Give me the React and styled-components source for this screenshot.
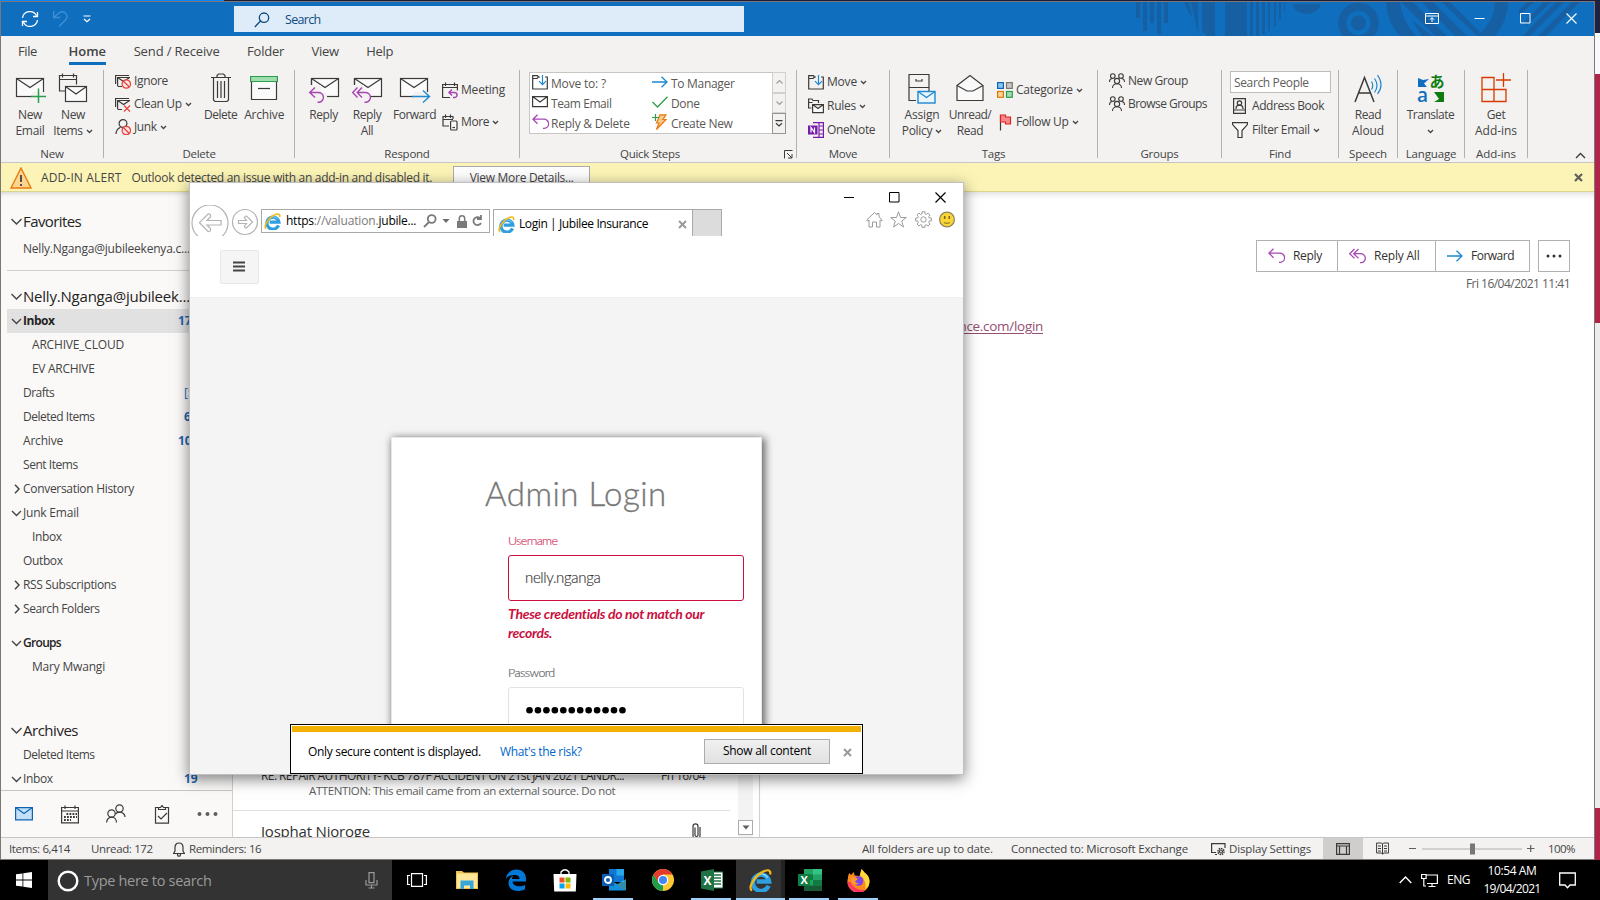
import React from "react";
import styled, { createGlobalStyle } from "styled-components";

const Global = createGlobalStyle`
  * { box-sizing: border-box; }
  body { margin: 0; overflow: hidden; font-family: "Open Sans", "Noto Sans CJK JP", sans-serif; }
  svg { display: block; flex: none; }
`;

/* ---------- shared ---------- */
const Text = styled.span`
  font-size: ${(p) => p.$size || 12}px;
  letter-spacing: ${(p) => (p.$ls === undefined ? -0.36 : p.$ls)}px;
  font-weight: ${(p) => p.$weight || 400};
  color: ${(p) => p.$color || "inherit"};
  line-height: 16px;
  white-space: nowrap;
  flex: none;
`;
const Gap = styled.div`
  width: ${(p) => p.$w}px;
  flex: none;
`;

const Svg = ({ w, h, children, ...rest }) => (
  <svg width={w} height={h} viewBox={`0 0 ${w} ${h}`} fill="none" stroke="#3b3a39" strokeWidth="1.2" {...rest}>
    {children}
  </svg>
);

/* ---------- frame ---------- */
const Desktop = styled.div`
  width: 1600px;
  height: 900px;
  display: flex;
  flex-direction: column;
  background: #000;
`;
const TopStrip = styled.div`
  height: 1px;
  flex: none;
  background: linear-gradient(90deg, #0a84ff 224px, #1c1b38 224px);
`;
const Upper = styled.div`
  display: flex;
  height: 859px;
`;
const EdgeStrip = styled.div`
  width: 5px;
  background: linear-gradient(
    #1f2042 32px, #f9f9fb 32px 73px, #b02449 73px 322px, #ececec 322px 807px, #b02449 807px
  );
`;
const OutlookWindow = styled.div`
  width: 1595px;
  border: 1px solid #7b7876;
  background: #fff;
  display: flex;
  flex-direction: column;
  color: #444;
`;

/* ---------- title bar ---------- */
const TitleBar = styled.div`
  height: 34px;
  flex: none;
  background: #106ebe;
  display: flex;
  align-items: center;
  position: relative;
`;
const QuickAccess = styled.div`
  width: 233px;
  padding-left: 20px;
  display: flex;
  align-items: center;
  gap: 14px;
`;
const SearchBox = styled.div`
  width: 510px;
  height: 26px;
  background: #deecf9;
  color: #0f4a80;
  display: flex;
  align-items: center;
  padding: 1px 0 0 20px;
  gap: 15px;
`;
const Pattern = styled.svg`
  position: absolute;
  top: 0;
  right: 0;
`;
const WindowButtons = styled.div`
  margin-left: auto;
  position: relative;
  display: flex;
  align-items: center;
  gap: 35px;
  padding: 0 17px 2px 0;
`;

/* ---------- ribbon ---------- */
const TabRow = styled.div`
  height: 34px;
  flex: none;
  background: #f3f2f1;
  display: flex;
  padding-left: 17px;
  gap: 27.5px;
`;
const Tab = styled.div`
  height: 29px;
  padding-top: 6px;
  line-height: 16px;
  margin-right: ${(p) => p.$after || 0}px;
  border-bottom: 3px solid ${(p) => (p.$active ? "#106ebe" : "transparent")};
`;
const Ribbon = styled.div`
  height: 93px;
  flex: none;
  background: #f3f2f1;
  border-bottom: 1px solid #c8c6c4;
  display: flex;
`;
const Group = styled.div`
  width: ${(p) => p.$w}px;
  height: 92px;
  display: flex;
  flex-direction: column;
  flex: none;
`;
const GroupBody = styled.div`
  height: 76px;
  display: flex;
  padding-left: ${(p) => p.$pl || 0}px;
`;
const GroupLabel = styled.div`
  height: 16px;
  display: flex;
  justify-content: center;
  padding-right: ${(p) => (p.$launcher ? 16 : 0)}px;
  position: relative;
`;
const Launcher = styled.div`
  position: absolute;
  right: 3px;
  top: 4px;
`;
const Separator = styled.div`
  width: 1px;
  height: 88px;
  background: #b3b0ad;
  flex: none;
`;
const BigButton = styled.div`
  width: ${(p) => p.$w}px;
  flex: none;
  display: flex;
  flex-direction: column;
  align-items: center;
`;
const BigIcon = styled.div`
  height: 37px;
  flex: none;
  padding-top: 2px;
`;
const Line = styled.div`
  height: 16px;
  display: flex;
  align-items: center;
  gap: 3px;
`;
const SmallColumn = styled.div`
  display: flex;
  flex-direction: column;
  padding-top: ${(p) => p.$pt || 0}px;
  padding-left: ${(p) => p.$pl || 0}px;
  gap: ${(p) => p.$gap || 0}px;
`;
const SmallButton = styled.div`
  height: 16px;
  display: flex;
  align-items: center;
  gap: 3px;
`;
const Slot = styled.div`
  width: ${(p) => p.$w || 16}px;
  display: flex;
  justify-content: center;
  flex: none;
`;
const Gallery = styled.div`
  width: 257px;
  height: 62px;
  margin-top: 2px;
  background: #fff;
  border: 1px solid #c8c6c4;
  display: flex;
`;
const GalleryColumn = styled.div`
  width: ${(p) => p.$w}px;
  padding: 3px 0 0 2px;
  display: flex;
  flex-direction: column;
  gap: 4px;
  color: #5a5856;
`;
const GalleryIcon = styled.div`
  margin-top: -4px;
`;
const GalleryScroll = styled.div`
  width: 14px;
  margin: -1px -1px -1px auto;
  display: flex;
  flex-direction: column;
`;
const ScrollCell = styled.div`
  flex: 1;
  display: flex;
  align-items: center;
  justify-content: center;
  background: #f3f2f1;
  border: 1px solid ${(p) => (p.$strong ? "#979593" : "#d2d0ce")};
`;
const PeopleSearch = styled.div`
  width: 101px;
  height: 22px;
  margin-bottom: -3px;
  border: 1px solid #bebbb8;
  background: #fff;
  padding: 1px 0 0 3px;
  line-height: 16px;
`;
const CollapseRibbon = styled.div`
  margin-left: auto;
  padding: 82px 8px 0 0;
`;

/* ---------- alert bar ---------- */
const AlertBar = styled.div`
  height: 29px;
  flex: none;
  background: #fbf4b6;
  border-bottom: 1px solid #ddd68a;
  display: flex;
  align-items: center;
  padding: 1px 0 0 9px;
`;
const DetailsButton = styled.div`
  width: 137px;
  height: 24px;
  margin-left: 21px;
  background: #fdfdfd;
  border: 1px solid #ababab;
  display: flex;
  align-items: center;
  justify-content: center;
`;

/* ---------- main area ---------- */
const Main = styled.div`
  flex: 1;
  min-height: 0;
  display: flex;
`;
const NavPane = styled.div`
  width: 232px;
  background: #faf9f8;
  border-right: 1px solid #d2d0ce;
  box-shadow: inset 0 5px 5px -4px rgba(0, 0, 0, 0.18);
  display: flex;
  flex-direction: column;
  flex: none;
`;
const Folders = styled.div`
  height: 598px;
  padding: 17px 0 0 6px;
  overflow: hidden;
`;
const FolderRow = styled.div`
  height: 24px;
  margin-top: ${(p) => p.$mt || 0}px;
  background: ${(p) => (p.$selected ? "#e1e1e1" : "transparent")};
  color: ${(p) => (p.$strong ? "#252423" : "#444")};
  display: flex;
  align-items: center;
  padding-left: ${(p) => (p.$child ? 25 : 3)}px;
`;
const Arrow = styled.div`
  width: 12px;
  margin-right: 1px;
  display: flex;
  justify-content: center;
`;
const Count = styled.div`
  margin-left: auto;
  width: ${(p) => p.$w}px;
  display: flex;
  color: #1f66b0;
`;
const NavRule = styled.div`
  height: 1px;
  background: #d2d0ce;
  margin-top: 9px;
`;
const NavIcons = styled.div`
  flex: 1;
  border-top: 1px solid #c8c6c4;
  display: flex;
  align-items: center;
  padding-left: 14px;
`;
const NavSlot = styled.div`
  width: 45.5px;
  flex: none;
`;
const MailList = styled.div`
  width: 527px;
  border-right: 1px solid #d2d0ce;
  display: flex;
  flex: none;
`;
const MailItems = styled.div`
  width: 497px;
  height: 645px;
  overflow: hidden;
  padding-top: 576px;
`;
const MailItem = styled.div`
  height: 43px;
  padding-left: 28px;
  border-bottom: 1px solid #e1dfdd;
  color: #323130;
`;
const MailRow = styled.div`
  display: flex;
  height: ${(p) => p.$h || 16}px;
  padding-left: ${(p) => p.$pl || 0}px;
`;
const NextMail = styled.div`
  display: flex;
  justify-content: space-between;
  padding: 12px 29px 0 28px;
  color: #323130;
`;
const ScrollTrack = styled.div`
  width: 15px;
  margin-left: 8px;
  background: #f3f3f3;
  display: flex;
  flex-direction: column;
  justify-content: flex-end;
  padding-bottom: 2px;
`;
const ScrollDown = styled.div`
  height: 15px;
  border: 1px solid #ababab;
  background: #fff;
  display: flex;
  align-items: center;
  justify-content: center;
`;
const Reading = styled.div`
  flex: 1;
  box-shadow: inset 0 6px 6px -4px rgba(0, 0, 0, 0.14);
  padding: 48px 24px 0 0;
  display: flex;
  flex-direction: column;
  align-items: flex-end;
`;
const Actions = styled.div`
  display: flex;
  height: 32px;
  color: #323130;
`;
const Action = styled.div`
  width: ${(p) => p.$w}px;
  border: 1px solid #b3b0ad;
  margin-right: -1px;
  display: flex;
  align-items: center;
  padding-left: 11px;
  gap: 8px;
`;
const MoreAction = styled.div`
  width: 32px;
  margin-left: 9px;
  border: 1px solid #b3b0ad;
  display: flex;
  align-items: center;
  justify-content: center;
`;
const Stamp = styled.div`
  height: 16px;
  margin-top: 4px;
  display: flex;
`;
const MailLink = styled.div`
  align-self: flex-start;
  width: 283px;
  margin-top: 25px;
  text-align: right;
  line-height: 18px;
  font-size: 13.5px;
  letter-spacing: -0.3px;
  color: #954f72;
  text-decoration: underline;
  text-underline-offset: 2px;
`;

/* ---------- status bar ---------- */
const StatusBar = styled.div`
  height: 22px;
  flex: none;
  background: #f3f2f1;
  border-top: 1px solid #c8c6c4;
  display: flex;
  align-items: center;
  padding-left: 8px;
`;
const StatusCell = styled.div`
  width: ${(p) => p.$w}px;
  flex: none;
  display: flex;
  align-items: center;
  gap: ${(p) => p.$gap || 0}px;
  padding-top: ${(p) => p.$pt || 0}px;
`;
const ViewToggle = styled.div`
  width: ${(p) => p.$w || 40}px;
  height: 21px;
  flex: none;
  background: ${(p) => (p.$active ? "#d0cecc" : "transparent")};
  display: flex;
  align-items: center;
  justify-content: center;
`;

/* ---------- browser ---------- */
const Browser = styled.div`
  position: absolute;
  left: 189px;
  top: 182px;
  width: 775px;
  height: 593px;
  background: #fff;
  border: 1px solid #c0bfc4;
  box-shadow: 0 4px 14px rgba(0, 0, 0, 0.5);
  display: flex;
  flex-direction: column;
  color: #000;
`;
const Caption = styled.div`
  height: 26px;
  flex: none;
  display: flex;
  justify-content: flex-end;
  gap: 35px;
  padding: 9px 17px 0 0;
`;
const BrowserBar = styled.div`
  height: 27px;
  flex: none;
  display: flex;
  padding-left: 1px;
`;
const NavCircles = styled.div`
  width: 70px;
  height: 31px;
  margin-top: -4px;
  overflow: hidden;
`;
const UrlBox = styled.div`
  width: 229px;
  height: 24px;
  border: 1px solid #a9a9a9;
  display: flex;
  align-items: center;
  padding-left: 2px;
`;
const UrlText = styled.div`
  width: 137px;
  margin-left: 5px;
  display: flex;
`;
const UrlIcons = styled.div`
  display: flex;
  align-items: center;
`;
const PageTab = styled.div`
  width: 200px;
  margin-left: 3px;
  border: 1px solid #a9a9a9;
  border-bottom: 0;
  display: flex;
  align-items: center;
  padding: 2px 5px 0 4px;
  gap: 4px;
`;
const TabClose = styled.div`
  margin-left: auto;
`;
const NewTab = styled.div`
  width: 29px;
  background: #dcdcdc;
  border: 1px solid #a9a9a9;
  border-width: 1px 1px 0 0;
`;
const BrowserTools = styled.div`
  margin: 2px 8px 0 auto;
  display: flex;
  gap: 7.5px;
`;
const PageHeader = styled.div`
  height: 61px;
  flex: none;
  padding: 14px 0 0 30px;
`;
const MenuButton = styled.div`
  width: 39px;
  height: 34px;
  background: #f5f5f5;
  border: 1px solid #e7e7e7;
  border-radius: 2px;
  display: flex;
  align-items: center;
  justify-content: center;
  padding: 0 1px 2px 0;
`;
const PageBody = styled.div`
  flex: 1;
  min-height: 0;
  overflow: hidden;
  background: #f4f4f4;
  border-top: 1px solid #efefef;
  padding: 139px 0 0 201px;
`;
const LoginCard = styled.div`
  width: 371px;
  height: 420px;
  background: #fff;
  border: 1px solid #e8e8e8;
  box-shadow: 2px 2px 8px 1px rgba(0, 0, 0, 0.6);
  padding: 35px 0 0 116px;
  font-family: Lato, sans-serif;
`;
const LoginTitle = styled.div`
  margin-left: -23px;
  font-size: 33px;
  font-weight: 300;
  letter-spacing: 0.5px;
  line-height: 40px;
  color: #777;
  -webkit-text-stroke: 0.35px #777;
  white-space: nowrap;
`;
const FieldLabel = styled.div`
  margin-top: ${(p) => p.$mt}px;
  font-size: 12.5px;
  font-weight: 300;
  letter-spacing: ${(p) => p.$ls}px;
  line-height: 18px;
  color: ${(p) => p.$color};
  -webkit-text-stroke: 0.2px ${(p) => p.$color};
`;
const Field = styled.div`
  width: 236px;
  height: 46px;
  margin-top: 5px;
  border: 1px solid ${(p) => (p.$error ? "#c8103e" : "#e2e2e2")};
  border-radius: 3px;
  padding: 0 0 ${(p) => (p.$error ? 3 : 0)}px 16px;
  display: flex;
  align-items: center;
  font-size: 15px;
  font-weight: 300;
  letter-spacing: -0.35px;
  color: #333;
  -webkit-text-stroke: 0.15px #333;
`;
const FieldError = styled.div`
  width: 215px;
  margin-top: 3px;
  font-size: 14px;
  font-weight: 700;
  font-style: italic;
  letter-spacing: -0.3px;
  line-height: 19px;
  color: #c8103e;
`;
const Notice = styled.div`
  position: absolute;
  left: 290px;
  top: 724px;
  width: 573px;
  height: 50px;
  background: #fff;
  border: 1px solid #000;
  padding: 1px;
  color: #000;
`;
const NoticeStripe = styled.div`
  height: 6px;
  background: #f2b100;
`;
const NoticeRow = styled.div`
  height: 40px;
  display: flex;
  align-items: center;
  padding-left: 16px;
`;
const NoticeButton = styled.div`
  width: 126px;
  height: 25px;
  margin: 0 13px 2px auto;
  background: linear-gradient(#f0f0f0, #e1e1e1);
  border: 1px solid #acacac;
  display: flex;
  align-items: center;
  justify-content: center;
`;
const NoticeClose = styled.div`
  margin-right: 9px;
`;

/* ---------- taskbar ---------- */
const Taskbar = styled.div`
  height: 40px;
  background: #000;
  display: flex;
  flex: none;
`;
const StartButton = styled.div`
  width: 48px;
  padding: 12px 0 0 16px;
`;
const TaskSearch = styled.div`
  width: 344px;
  background: #333;
  color: #9a9a9a;
  display: flex;
  align-items: center;
  padding: 1px 14px 0 9px;
  gap: 5px;
`;
const Grow = styled.div`
  flex: 1;
`;
const TaskItem = styled.div`
  width: ${(p) => p.$w || 49}px;
  height: 40px;
  display: flex;
  align-items: center;
  justify-content: center;
  background: ${(p) => (p.$active ? "linear-gradient(90deg,#333 45px,#222 45px)" : "none")};
  box-shadow: ${(p) => (p.$active ? "inset 0 -2px #9cd0f8" : "none")};
  position: relative;
  &::after {
    content: "";
    display: ${(p) => (p.$running ? "block" : "none")};
    position: absolute;
    left: 4px;
    width: 40px;
    bottom: 0;
    height: 2px;
    background: #9cd0f8;
  }
`;
const Tray = styled.div`
  margin-left: auto;
  display: flex;
  align-items: center;
  color: #fff;
  padding-right: 24px;
`;
const Clock = styled.div`
  width: 58px;
  margin: 0 18px 0 13px;
  display: flex;
  flex-direction: column;
  align-items: center;
  gap: 2px;
`;

/* ---------- icons ---------- */
const PURPLE = "#a846b4";
const BLUE = "#1e88d0";
const Chev = ({ c = "#444" }) => (
  <Svg w={7} h={5} stroke={c} strokeWidth="1.3"><path d="M1 1 3.500 3.500 6 1" /></Svg>
);
const Mail = ({ x = 0, y = 0, w = 27, h = 18 }) => (
  <g transform={`translate(${x} ${y})`}>
    <rect x=".5" y=".5" width={w} height={h} fill="#fafafa" />
    <path d={`M.5 .5 ${w / 2 + 0.5} ${h * 0.53} ${w + 0.5} .5`} />
  </g>
);
const SmallReply = ({ all }) => (
  <Svg w={17} h={16} stroke={PURPLE} strokeWidth="1.3">
    <path d={all ? "M5.500 1 .7 5.700 5.500 10.400M9.500 1 4.700 5.700 9.500 10.400M5 5.700h6a4.500 4.500 0 0 1 1.500 9h-1.500" : "M5.500 .7 1 5.200 5.500 9.700M1 5.200h10.500a4.600 4.600 0 0 1 1 9.200h-1.500"} />
  </Svg>
);
const ArrowRight = () => (
  <Svg w={16} h={12} stroke={BLUE} strokeWidth="1.3"><path d="M0 6h15M9.500 .7 15 6 9.500 11.300" /></Svg>
);
const NoSign = ({ x, y }) => (
  <g stroke="#e8413c" transform={`translate(${x} ${y})`}><circle r="4.200" fill="#fde7e6" /><path d="M-3-3 3 3" /></g>
);
const EnvelopeStack = ({ cross }) => (
  <Svg w={16} h={15}>
    <path d="M.6 10V1.500h13.500" /><path d="M2.600 12V3.500H15M2.600 3.500l6 4 6-4M2.600 12.500h4.500" />
    {cross ? <path d="M9 8.500l6 6M15 8.500l-6 6" stroke="#e8413c" /> : <NoSign x={11.300} y={10} />}
  </Svg>
);
const FolderDown = () => (
  <Svg w={16} h={15}>
    <path d="M8 2H6.500L5.500 .7H.7V14h14.600V2H13" /><path d="M.7 3.500H5L6.500 2" />
    <path d="M10.500 0v9.500M7 6.200l3.500 3.500L14 6.200" stroke={BLUE} />
  </Svg>
);
const PeopleGroup = () => (
  <Svg w={16} h={16} strokeWidth="1.1">
    <circle cx="3.800" cy="3" r="2.300" /><circle cx="12" cy="3" r="2.300" /><circle cx="8" cy="8" r="2.600" />
    <path d="M.5 9c0-2 1.500-3.500 3.300-3.500M15.500 9c0-2-1.500-3.500-3.300-3.500M3.500 15c0-2.500 2-4.300 4.500-4.300s4.500 1.800 4.500 4.300" />
  </Svg>
);
const Expand = ({ open = true, big }) => open ? (
  <Svg w={11} h={7} stroke="#444" strokeWidth="1.4"><path d={big ? "M.5 1 5.500 6 10.500 1" : "M1 1 5.500 5.500 10 1"} /></Svg>
) : (
  <Svg w={7} h={10} stroke="#444" strokeWidth="1.500"><path d="M2 .8 6 5 2 9.200" /></Svg>
);
const IE = ({ s = 17 }) => (
  <svg width={s} height={s} viewBox="0 0 24 24" fill="none">
    <path d="M20.500 17.500A8.500 8.500 0 1 1 21 13H8" stroke="#2f9fe0" strokeWidth="4.600" />
    <path d="M19.500 9A7.500 7.500 0 0 0 6 10" stroke="#8fdcff" strokeWidth="1.300" />
    <path d="M3 22.500C-1.500 19 7 5 17 1.800c4-1.300 6 .2 5 4" stroke="#f3b917" strokeWidth="2.300" />
  </svg>
);
const Cross = ({ s = 9, c = "#7a7a7a", sw = 2.2 }) => (
  <Svg w={s} h={s} stroke={c} strokeWidth={sw}><path d={`M1 1 ${s - 1} ${s - 1}M${s - 1} 1 1 ${s - 1}`} /></Svg>
);

/* ---------- sections ---------- */
const Title = () => (
  <TitleBar>
    <Pattern width="460" height="34" viewBox="1134 2 460 34" fill="#165fa3">
      <path d="M1136 2h4v16h-4zM1143 2h4v29h-4zM1150 2h4v21h-4zM1157 2h4v32h-4zM1164 2h4v21h-4z" />
      <path d="M1184 2h5l3 14-2-1zM1191 2h7v31zM1202 2h13v34h-8l-5-5zM1225 2h22v34h-22zM1250 2h3v34h-3zM1256 2h3v34h-3zM1262 2h3v32h-3zM1268 2h2v29h-2zM1274 2h2v24h-2zM1279 2h2v18h-2zM1284 2h1v10h-1zM1293 4a13.500 10 0 0 0 27 0z" />
      <circle cx="1358.500" cy="23" r="16.200" fill="none" stroke="#165fa3" strokeWidth="8" /><circle cx="1358.500" cy="23" r="7.500" />
      <path d="M1386 2h14q2 19 16 34h-16q-13-14-14-34zM1495 2h13q0 18-13 34h-18q17-14 18-34z" />
      <path d="M1401 2h12l34 34h-12zM1422 2h11l34 34h-12zM1412 20l20 16h-10zM1442 2h8l30 30-3 4z" />
      <path d="M1519 10l8-8h7l-15 13zM1524 22l20-20h7l-25 24zM1532 26l24-24h8l-34 34h-7zM1548 26l24-24h8l-34 34h-8z" />
    </Pattern>
    <QuickAccess>
      <Svg w={18} h={18} stroke="#fff" strokeWidth="1.300">
        <path d="M1.500 8A7.500 7.500 0 0 1 15.500 5.500M16.500 10A7.500 7.500 0 0 1 2.500 12.500M16.500 2v4.500H12M1.500 16v-4.500H6" />
      </Svg>
      <Svg w={16} h={18} stroke="#3f8fd4" strokeWidth="1.400"><path d="M.7 1v6.500h6.500M.7 7.500 6 3C8 1.500 10 1.300 12 2.700c3 2.300 2.500 5.300.5 7.300L6 16.500" /></Svg>
      <Svg w={8} h={8} stroke="#fff"><path d="M.5 1h7M1 4l3 2.700L7 4" /></Svg>
    </QuickAccess>
    <SearchBox>
      <Svg w={16} h={16} stroke="#0f4a80" strokeWidth="1.300"><circle cx="10" cy="5.700" r="4.700" /><path d="M6.500 9 .8 15" /></Svg>
      <Text $size={12.5} $ls={-0.7}>Search</Text>
    </SearchBox>
    <WindowButtons>
      <Svg w={14} h={11} stroke="#fff" strokeWidth="1"><path d="M.5 .5h13v10H.500zM.5 3h13M7 9V4.800M5 6.700l2-2 2 2" /></Svg>
      <Svg w={11} h={11} stroke="#fff" strokeWidth="1"><path d="M.5 5.500h10" /></Svg>
      <Svg w={11} h={11} stroke="#fff" strokeWidth="1"><path d="M.5 .5h9.500v9.500H.5z" /></Svg>
      <Svg w={11} h={11} stroke="#fff" strokeWidth="1.100"><path d="M.5 .5l10 10M10.500 .5l-10 10" /></Svg>
    </WindowButtons>
  </TitleBar>
);

const Big = ({ w, icon, a, b, arrow, la, lb }) => (
  <BigButton $w={w}>
    <BigIcon>{icon}</BigIcon>
    <Line><Text $ls={la}>{a}</Text></Line>
    <Line>{b && <Text $ls={lb}>{b}</Text>}{arrow && <Chev />}</Line>
  </BigButton>
);
const Small = ({ icon, t, ls, arrow, slot }) => (
  <SmallButton><Slot $w={slot}>{icon}</Slot><Text $ls={ls}>{t}</Text>{arrow && <Chev />}</SmallButton>
);
const RibbonGroup = ({ w, label, pl, ls = -0.25, launcher, children }) => (
  <>
    <Group $w={w}>
      <GroupBody $pl={pl}>{children}</GroupBody>
      <GroupLabel $launcher={launcher}>
        <Text $size={11.5} $ls={ls}>{label}</Text>
        {launcher && <Launcher><Svg w={9} h={9} strokeWidth="1"><path d="M.5 8.500v-8h8M3 3l5 5M8 4v4H4" /></Svg></Launcher>}
      </GroupLabel>
    </Group>
    <Separator />
  </>
);

const MailReply = ({ all }) => (
  <Svg w={32} h={34}>
    <Mail x={3} y={6} />
    <path d="M1 13h12v8h6v8H1z" fill="#f3f2f1" stroke="none" />
    <path d="M3.500 13V6.500M19 24.500h11.500" />
    <g transform="translate(1 15)" stroke={PURPLE} strokeWidth="1.400">
      {all ? <path d="M5.500 .5.700 5.500l4.800 5M10 .5 5.200 5.500l4.800 5M5.200 5.500H13a4.900 4.900 0 0 1 1 9.800h-1.500" /> : <path d="M6 .5.700 5.500l5.300 5M.7 5.500H9a4.900 4.900 0 0 1 1 9.800H8.500" />}
    </g>
  </Svg>
);

const RibbonBar = () => (
  <Ribbon>
    <RibbonGroup w={102} label="New" pl={7}>
      <Big w={44} a="New" b="Email" lb={-0.3} icon={
        <Svg w={32} h={34}><Mail x={2} y={6} /><path d="M18 20h14v9H18z" fill="#f3f2f1" stroke="none" /><path d="M24.500 16.500V31M17 24.500h15" stroke="#2c9e4b" strokeWidth="1.500" /></Svg>} />
      <Big w={42} a="New" b="Items" arrow icon={
        <Svg w={30} h={34}>
          <path d="M7 19H1.500V3.500h17v9M1.500 7.500h17M4.500 1.500v4M15.500 1.500v4" /><Mail x={7} y={14} w={21} h={15} />
        </Svg>} />
    </RibbonGroup>
    <RibbonGroup w={190} label="Delete" pl={11}>
      <SmallColumn $pt={3} $gap={7}>
        <Small t="Ignore" icon={<EnvelopeStack />} />
        <Small t="Clean Up" arrow icon={<EnvelopeStack cross />} />
        <Small t="Junk" arrow icon={
          <Svg w={16} h={16}><circle cx="8" cy="4.500" r="3.900" /><path d="M1 15c0-3 2-5.500 4.500-6.700" /><NoSign x={11.300} y={11.500} /></Svg>} />
      </SmallColumn>
      <Gap $w={9} />
      <Big w={40} a="Delete" la={-0.5} icon={
        <Svg w={22} h={34}><path d="M1 5.500h20M7 5V3.500L8.500 2h5L15 3.500V5M3.500 6v22l1.500 1.500h12l1.500-1.500V6M7.500 9v17M11 9v17M14.500 9v17" /></Svg>} />
      <Big w={47} a="Archive" la={-0.2} icon={
        <Svg w={28} h={34}><path d="M1.500 9h25v18.500h-25z" fill="#fafafa" /><path d="M.6 4.500h26.800v5H.600z" fill="#9fdcae" stroke="#2c9e4b" /><path d="M8 16.500h12" /></Svg>} />
    </RibbonGroup>
    <RibbonGroup w={224} label="Respond" pl={7}>
      <Big w={43} a="Reply" icon={<MailReply />} />
      <Big w={44} a="Reply" b="All" icon={<MailReply all />} />
      <Big w={51} a="Forward" la={-0.5} icon={
        <Svg w={32} h={34}><Mail x={1} y={6} /><path d="M15 20h16v9H15z" fill="#f3f2f1" stroke="none" /><path d="M13 24.500h17M24 18.500l6.500 6-6.500 6" stroke={BLUE} strokeWidth="1.400" /></Svg>} />
      <SmallColumn $pt={12} $gap={16} $pl={2}>
        <Small t="Meeting" ls={-0.2} icon={
          <Svg w={16} h={17}><path d="M8 15.500H.600V2.500h14.800v6M.6 5.500h14.800M3.500 .5v3.500M12.500 .5v3.500" /><path d="M10 7.500 7 10.500l3 3M7 10.500h5.500a2.500 2.500 0 0 1 0 5H11" stroke={PURPLE} strokeWidth="1.500" /></Svg>} />
        <Small t="More" arrow icon={
          <Svg w={16} h={17}><path d="M7 12H1V2.500h10V5M1 5.500h10M3.500 .5v3.500M8.500 .5v3.500" /><rect x="8.600" y="7" width="6.400" height="9" rx="1" fill="#fafafa" /><path d="M10.500 13.500h2.500" /></Svg>} />
      </SmallColumn>
    </RibbonGroup>
    <RibbonGroup w={276} label="Quick Steps" pl={9} launcher>
      <Gallery>
        <GalleryColumn $w={120}>
          <Small t="Move to: ?" ls={-0.18} icon={<GalleryIcon><FolderDown /></GalleryIcon>} />
          <Small t="Team Email" ls={-0.42} icon={<GalleryIcon><Svg w={16} h={12}><path d="M.6 .6h14.800v10H.600zM.6 .6 8 6l7.400-5.400" /></Svg></GalleryIcon>} />
          <Small t="Reply & Delete" ls={-0.22} icon={<GalleryIcon><SmallReply /></GalleryIcon>} />
        </GalleryColumn>
        <GalleryColumn $w={120}>
          <Small t="To Manager" ls={-0.3} icon={<GalleryIcon><ArrowRight /></GalleryIcon>} />
          <Small t="Done" icon={<GalleryIcon><Svg w={16} h={12} stroke="#2c9e4b" strokeWidth="1.300"><path d="M.5 6 5.500 11 15.500 .8" /></Svg></GalleryIcon>} />
          <Small t="Create New" ls={-0.36} icon={
            <GalleryIcon><Svg w={16} h={16}><path d="M8 .8h6L11 5.500h3L4.500 15.500 7 9H4.500z" fill="#fbc98a" stroke="#e87a10" /><path d="M3.500 0v7M0 3.500h7" stroke="#2c9e4b" /></Svg></GalleryIcon>} />
        </GalleryColumn>
        <GalleryScroll>
          <ScrollCell><Svg w={7} h={4} stroke="#a19f9d"><path d="M.5 3.500l3-3 3 3" /></Svg></ScrollCell>
          <ScrollCell><Svg w={7} h={4} stroke="#a19f9d"><path d="M.5 .5l3 3 3-3" /></Svg></ScrollCell>
          <ScrollCell $strong><Svg w={8} h={7}><path d="M.5 .7h7M1 3.200l3 2.800 3-2.800" /></Svg></ScrollCell>
        </GalleryScroll>
      </Gallery>
    </RibbonGroup>
    <RibbonGroup w={92} label="Move" pl={11}>
      <SmallColumn $pt={4} $gap={8}>
        <Small t="Move" ls={-0.2} arrow icon={<FolderDown />} />
        <Small t="Rules" ls={-0.25} arrow icon={
          <Svg w={16} h={16}><path d="M3.500 10H.600V1H4l1 1.500h5.500V5M.6 4.500h4" /><path d="M4.600 6.600h10.800v8H4.600zM4.600 6.600 10 10.500l5.400-3.900" fill="#fafafa" /></Svg>} />
        <Small t="OneNote" icon={
          <Svg w={16} h={16} stroke="#7719aa"><path d="M5 .6h10.400v14.800H5M11 .6v14.800M11 4h4.500M11 8h4.500M11 12h4.500" /><rect y="3.500" width="9.500" height="9" fill="#7719aa" stroke="none" /><path d="M3 10.500v-5l3.500 5v-5" stroke="#fff" /></Svg>} />
      </SmallColumn>
    </RibbonGroup>
    <RibbonGroup w={207} label="Tags" pl={7}>
      <Big w={50} a="Assign" b="Policy" la={-0.15} lb={-0.3} arrow icon={
        <Svg w={28} h={34}><path d="M8 28.500H1V2.500h20v17M1 15.500h20M8 7v2h6V7" fill="none" /><rect x="10" y="19.500" width="17" height="11.500" fill="#eaf5fd" stroke={BLUE} strokeWidth="1.400" /><path d="M10 19.500l8.500 6 8.500-6" stroke={BLUE} /></Svg>} />
      <Big w={46} a="Unread/" b="Read" la={-0.55} icon={
        <Svg w={28} h={34}><path d="M1 13.500 14 3.500l13 10v15H1z" fill="#fafafa" /><path d="M1 13.500l10 5.500h6l10-5.500" /></Svg>} />
      <SmallColumn $pt={12} $gap={16} $pl={4}>
        <Small t="Categorize" ls={-0.25} arrow icon={
          <Svg w={16} h={16}><rect x=".6" y=".6" width="5.800" height="5.800" fill="#8ac4f0" stroke="#1165b3" /><rect x="9.500" y=".6" width="5.800" height="5.800" fill="#c8c6c4" stroke="#797775" /><rect x=".6" y="9.500" width="5.800" height="5.800" fill="#fcd691" stroke="#d67a0c" /><rect x="9.500" y="9.500" width="5.800" height="5.800" fill="#a4dbb0" stroke="#2c9e4b" /></Svg>} />
        <Small t="Follow Up" ls={-0.3} arrow icon={
          <Svg w={13} h={17}><path d="M1.500 1v15.500" /><path d="M1.500 1h5v2h5v7h-5V8h-5z" fill="#f7898d" stroke="#d9251d" /></Svg>} />
      </SmallColumn>
    </RibbonGroup>
    <RibbonGroup w={123} label="Groups" pl={11}>
      <SmallColumn $pt={3} $gap={7}>
        <Small t="New Group" ls={-0.42} icon={<PeopleGroup />} />
        <Small t="Browse Groups" ls={-0.54} icon={<PeopleGroup />} />
      </SmallColumn>
    </RibbonGroup>
    <RibbonGroup w={116} label="Find" pl={8}>
      <SmallColumn $pt={1} $gap={8}>
        <PeopleSearch><Text $ls={-0.36} $color="#605e5c">Search People</Text></PeopleSearch>
        <Small slot={19} t="Address Book" ls={-0.41} icon={
          <Svg w={13} h={16}><path d="M.6 .6h11.800v14.800H.600zM.6 12h11.800" /><circle cx="6.500" cy="5" r="2.200" /><path d="M3 11c0-2.500 1.500-3.800 3.500-3.800S10 8.500 10 11" /></Svg>} />
        <Small slot={19} t="Filter Email" ls={-0.35} arrow icon={<Svg w={16} h={16}><path d="M.6 .6h14.800v2L10 8.500v7H6v-7L.6 2.600z" fill="#fafafa" /></Svg>} />
      </SmallColumn>
    </RibbonGroup>
    <RibbonGroup w={58} label="Speech" ls={-0.15}>
      <Big w={58} a="Read" b="Aloud" lb={-0.1} icon={
        <Svg w={28} h={34}><path d="M1 30 10.500 5.500 20 30M4.500 21h12" strokeWidth="1.500" /><path d="M17.500 9.500q2.500 4 0 8M20.500 6.500q5 7 0 14M23.500 3q7 10 0 19" stroke={BLUE} /></Svg>} />
    </RibbonGroup>
    <RibbonGroup w={66} label="Language" ls={-0.15}>
      <Big w={65} a="Translate" la={-0.5} arrow icon={
        <Svg w={28} h={34} stroke="none" overflow="visible">
          <text x="12.500" y="15" fontSize="15" fontWeight="700" fill="#107c10" fontFamily="Noto Sans CJK JP">あ</text>
          <text x="0" y="29.500" fontSize="19" fontWeight="600" fill="#106ebe" fontFamily="Open Sans">a</text>
          <path d="M1 6v9h9l-3-3.500L12 7l-6 1z" fill="#106ebe" /><path d="M27 20v10H17l5-3-5-7z" fill="#107c10" />
        </Svg>} />
    </RibbonGroup>
    <RibbonGroup w={62} label="Add-ins" ls={-0.1}>
      <Big w={62} a="Get" b="Add-ins" lb={-0.05} icon={
        <Svg w={30} h={34} stroke="#d83b01" strokeWidth="1.300"><path d="M1 5.500h12v24H1zM1 17.500h24v12H1M25 17.500v12M13 17.500h12M22.500 1v14M15 8h15" /></Svg>} />
    </RibbonGroup>
    <CollapseRibbon><Svg w={11} h={7} strokeWidth="1.400"><path d="M1 6l4.500-4.500L10 6" /></Svg></CollapseRibbon>
  </Ribbon>
);

const folders = [
  { t: "Favorites", size: 15, ls: -0.6, big: 1, open: true, strong: true },
  { t: "Nelly.Nganga@jubileekenya.c...", ls: -0.21, mt: 4, rule: true },
  { t: "Nelly.Nganga@jubileek...", size: 15, ls: -0.21, big: 1, open: true, mt: 13, strong: true },
  { t: "Inbox", weight: 700, ls: -0.46, open: true, selected: true, strong: true, mt: 1, count: "172", cw: 54 },
  { t: "ARCHIVE_CLOUD", ls: -0.19, child: true },
  { t: "EV ARCHIVE", ls: -0.3, child: true },
  { t: "Drafts", ls: -0.5, count: "[5]", cw: 48, light: true },
  { t: "Deleted Items", ls: -0.49, count: "64", cw: 48 },
  { t: "Archive", ls: -0.2, count: "106", cw: 54 },
  { t: "Sent Items", ls: -0.45 },
  { t: "Conversation History", ls: -0.31, open: false },
  { t: "Junk Email", ls: -0.2, open: true },
  { t: "Inbox", child: true },
  { t: "Outbox" },
  { t: "RSS Subscriptions", open: false },
  { t: "Search Folders", ls: -0.4, open: false },
  { t: "Groups", weight: 600, ls: -0.69, open: true, mt: 10, strong: true },
  { t: "Mary Mwangi", ls: -0.2, child: true },
  { t: "Archives", size: 15, ls: -0.48, big: 1, open: true, mt: 39, strong: true },
  { t: "Deleted Items", ls: -0.49, mt: 1 },
  { t: "Inbox", open: true, count: "19", cw: 48 },
];

const Navigation = () => (
  <NavPane>
    <Folders>
      {folders.map((f, i) => (
        <React.Fragment key={i}>
          <FolderRow $mt={f.mt} $child={f.child} $selected={f.selected} $strong={f.strong}>
            {!f.child && <Arrow>{f.open !== undefined && <Expand open={f.open} big={f.big} />}</Arrow>}
            <Text $size={f.size} $ls={f.ls} $weight={f.weight}>{f.t}</Text>
            {f.count && <Count $w={f.cw}><Text $weight={f.light ? 400 : 700} $ls={-0.2}>{f.count}</Text></Count>}
          </FolderRow>
          {f.rule && <NavRule />}
        </React.Fragment>
      ))}
    </Folders>
    <NavIcons>
      <NavSlot><Svg w={18} h={14} stroke="#1165b3"><path d="M.6 .6h16.800v12.300H.600z" fill="#c3e0f7" /><path d="M.6 .6 9 6.500 17.400 .6" /></Svg></NavSlot>
      <NavSlot><Svg w={18} h={19}><path d="M.6 2.500h16.800v15.400H.600zM.6 6h16.800M4 .5v3.500M14 .5v3.500" /><path d="M5.500 9h10.500M3 12h13M3 15h7" strokeDasharray="1.800 1.200" strokeWidth="1.800" /></Svg></NavSlot>
      <NavSlot><Svg w={20} h={20}><circle cx="13.500" cy="4.500" r="3.700" /><path d="M9.500 10c1-1.200 2.400-1.900 4-1.900 3 0 5.500 2.100 5.500 5" /><circle cx="5.500" cy="9.500" r="3.700" /><path d="M.6 18.500c0-3 2.200-5.300 5-5.300s4.900 2.300 4.900 5.300" /></Svg></NavSlot>
      <NavSlot><Svg w={20} h={19}><path d="M6 2.500H3.500v15.700h13V2.500H14M6.500 4.500V2.500h2l1.500-2 1.500 2h2v2z" /><path d="M6 11l3 3 6-6" /></Svg></NavSlot>
      <NavSlot><Svg w={22} h={6} fill="#605e5c" stroke="none"><circle cx="2.500" cy="3" r="2" /><circle cx="10.500" cy="3" r="2" /><circle cx="18.500" cy="3" r="2" /></Svg></NavSlot>
    </NavIcons>
  </NavPane>
);

const IEWindow = () => (
  <Browser>
    <Caption>
      <Svg w={10} h={10} stroke="#000" strokeWidth="1"><path d="M0 5.500h10" /></Svg>
      <Svg w={11} h={11} stroke="#000" strokeWidth="1"><path d="M.5 .5h9.500v9.500H.5z" /></Svg>
      <Svg w={11} h={11} stroke="#000" strokeWidth="1.200"><path d="M.5 .5l10 10M10.500 .5l-10 10" /></Svg>
    </Caption>
    <BrowserBar>
      <NavCircles>
        <Svg w={70} h={38} stroke="#b3b3b3">
          <circle cx="19" cy="18" r="18" /><path d="M8.500 17.700 17 9q1.500-.5 2.500 1v2l-3.500 3.500h14v4.500H16l3.500 3.500v2q-1 1.500-2.500 1z" />
          <circle cx="54" cy="17" r="12.500" /><path d="M61.500 17l-6-6q-2 0-2 2l2 2.500h-8v3h8l-2 2.500q0 2 2 2z" />
        </Svg>
      </NavCircles>
      <UrlBox>
        <IE s={17} />
        <UrlText>
          <Text $ls={-0.25}>https</Text><Text $ls={-0.15} $color="#7a7a7a">://valuation.</Text><Text $ls={-0.25}>jubile...</Text>
        </UrlText>
        <UrlIcons>
          <Svg w={14} h={14} stroke="#7a7a7a" strokeWidth="1.800"><circle cx="8.700" cy="5" r="3.900" /><path d="M6 8 1 13" /></Svg>
          <Svg w={20} h={14} stroke="none" fill="#6d6d6d"><path d="M5.500 5h7L9 9z" /></Svg>
          <Svg w={10} h={13} stroke="#7a7a7a"><path d="M0 6h10v7H0z" fill="#7a7a7a" stroke="none" /><path d="M2.300 6V3.500a2.700 2.700 0 0 1 5.400 0V6" strokeWidth="1.500" /></Svg>
          <Svg w={16} h={14} stroke="#7a7a7a" strokeWidth="1.800"><path d="M14 9A4 4 0 1 1 13 4M14 1v4h-4" /></Svg>
        </UrlIcons>
      </UrlBox>
      <PageTab>
        <IE s={17} />
        <Text $ls={-0.4}>Login | Jubilee Insurance</Text>
        <TabClose><Cross s={9} c="#9a9a9a" sw={2} /></TabClose>
      </PageTab>
      <NewTab />
      <BrowserTools>
        <Svg w={17} h={17} stroke="#9a9a9a" strokeWidth="1"><path d="M.7 9 8.500 1.500l2.500 2.300V2.500h2v3.300L16.300 9l-1 1-1.300-1v7h-3.500v-5h-4v5H3V9l-1.300 1z" /></Svg>
        <Svg w={17} h={17} stroke="#9a9a9a" strokeWidth="1"><path d="M8.500 .8l2 5.700h5.800l-4.600 3.600 1.800 5.900-5-3.600-5 3.600 1.800-5.900L.7 6.500h5.800z" /></Svg>
        <Svg w={17} h={17} stroke="#9a9a9a" strokeWidth="1">
          <path d="M7 .8h3v2l1.500.6 1.500-1.300 2 2L13.700 5.600l.6 1.400h2v3h-2l-.6 1.500 1.300 1.500-2 2-1.500-1.300-1.500.6v2H7v-2l-1.500-.6L4 15 2 13l1.300-1.500L2.700 10h-2V7h2l.6-1.400L2 4.100l2-2 1.500 1.300L7 2.800z" /><circle cx="8.500" cy="8.500" r="2.700" />
        </Svg>
        <Svg w={16} h={17} stroke="#8d8466"><circle cx="8" cy="8.500" r="7.400" fill="#fcd535" /><path d="M5.700 5v3M10.300 5v3" stroke="#7a6a1c" strokeWidth="1.600" /><path d="M5 11.500q3 1.800 6 0" stroke="#9a8526" strokeWidth="1.200" /></Svg>
      </BrowserTools>
    </BrowserBar>
    <PageHeader>
      <MenuButton><Svg w={12} h={11} stroke="#444" strokeWidth="2"><path d="M0 1.500h12M0 5.500h12M0 9.500h12" /></Svg></MenuButton>
    </PageHeader>
    <PageBody>
      <LoginCard>
        <LoginTitle>Admin Login</LoginTitle>
        <FieldLabel $mt={19} $ls={-0.65} $color="#d5476c">Username</FieldLabel>
        <Field $error>nelly.nganga</Field>
        <FieldError>These credentials do not match our records.</FieldError>
        <FieldLabel $mt={22} $ls={-0.55} $color="#666">Password</FieldLabel>
        <Field>
          <Svg w={104} h={8} stroke="none" fill="#000">
            {Array.from({ length: 12 }, (_, i) => <circle key={i} cx={4.500 + i * 8.450} cy="4.300" r="3.300" />)}
          </Svg>
        </Field>
      </LoginCard>
    </PageBody>
  </Browser>
);

const SecurityNotice = () => (
  <Notice>
    <NoticeStripe />
    <NoticeRow>
      <Text $ls={-0.32}>Only secure content is displayed.</Text>
      <Gap $w={19} />
      <Text $ls={-0.36} $color="#0066cc">What's the risk?</Text>
      <NoticeButton><Text $ls={-0.27}>Show all content</Text></NoticeButton>
      <NoticeClose><Cross s={9} c="#9a9a9a" sw={2} /></NoticeClose>
    </NoticeRow>
  </Notice>
);

const Status = () => (
  <StatusBar>
    <StatusCell $w={82}><Text $size={11.5}>Items: 6,414</Text></StatusCell>
    <StatusCell $w={82}><Text $size={11.5}>Unread: 172</Text></StatusCell>
    <StatusCell $w={689} $gap={4} $pt={1}>
      <Svg w={12} h={15}><path d="M.5 11.500h11L10 9V5.500C10 2.800 8.500 1 6 1S2 2.800 2 5.500V9zM4.500 12c0 3 3 3 3 0" /></Svg>
      <Text $size={11.5}>Reminders: 16</Text>
    </StatusCell>
    <StatusCell $w={149}><Text $size={11.5} $ls={-0.15}>All folders are up to date.</Text></StatusCell>
    <StatusCell $w={200} $pt={1}><Text $size={11.5} $ls={-0.18}>Connected to: Microsoft Exchange</Text></StatusCell>
    <StatusCell $w={112} $gap={3} $pt={1}>
      <Svg w={15} h={13}><path d="M5 9.500H.600V.6H14V5" /><path d="M4 11.500h2" /><circle cx="10" cy="8.500" r="3" strokeWidth="1.500" strokeDasharray="1.500 .8" /><circle cx="10" cy="8.500" r="1.500" /></Svg>
      <Text $size={11.5} $ls={-0.15}>Display Settings</Text>
    </StatusCell>
    <ViewToggle $active><Svg w={14} h={12}><path d="M.6 .6h12.800v10.800H.600zM.6 3h12.800M3.500 3v8.500M10.500 3v8.500" /></Svg></ViewToggle>
    <ViewToggle $w={39}><Svg w={13} h={13}><path d="M.6 1h5l1 1 1-1h5v10h-5l-1 1.300-1-1.300h-5zM6.500 2v10M2 4h3M2 6.500h3M2 9h3M8 4h3M8 6.500h3M8 9h3" strokeWidth="1" /></Svg></ViewToggle>
    <StatusCell $w={146}>
      <Svg w={140} h={13} stroke="#605e5c"><path d="M7 6.500h7M125 6.500h7.500M128.700 3v7" /><path d="M20 7h100" stroke="#b3b0ad" /><path d="M68 1.500h5v11h-5z" fill="#797775" stroke="none" /></Svg>
    </StatusCell>
    <Text $size={11.5} $ls={-0.56}>100%</Text>
  </StatusBar>
);

const Excel = () => (
  <Svg w={24} h={22} stroke="none">
    <path d="M6 0h18v22H6z" fill="#21a366" /><path d="M15 0h9v5.500h-9z" fill="#33c481" /><path d="M6 5.500h9V11H6z" fill="#107c41" /><path d="M15 11h9v5.500h-9z" fill="#107c41" /><path d="M6 16.500h18V22H6z" fill="#185c37" />
    <path d="M0 5h12v12H0z" fill="#107c41" /><text x="2.500" y="15" fontSize="11" fontWeight="700" fill="#fff" fontFamily="Open Sans">X</text>
  </Svg>
);

const WindowsTaskbar = () => (
  <Taskbar>
    <StartButton><Svg w={16} h={16} fill="#fff" stroke="none"><path d="M0 2.300 6.500 1.400v6.200H0zM7.300 1.300 16 0v7.600H7.300zM0 8.400h6.500v6.200L0 13.700zM7.300 8.400H16V16l-8.700-1.300z" /></Svg></StartButton>
    <TaskSearch>
      <Svg w={22} h={22} stroke="#fff" strokeWidth="2.400"><circle cx="11" cy="11" r="9.300" /></Svg>
      <Text $size={14.5} $ls={-0.31}>Type here to search</Text>
      <Grow />
      <Svg w={13} h={17} stroke="#9a9a9a"><path d="M4 .6h5v10H4zM1 8v5h11V8M6.500 13v3M3.500 16h6" /></Svg>
    </TaskSearch>
    <TaskItem $w={50}><Svg w={20} h={14} stroke="#fff"><path d="M4.500 .6h11v12.800h-11zM3 2.500H.600v9H3M17 2.500h2.400v9H17" /></Svg></TaskItem>
    <TaskItem>
      <Svg w={22} h={20} stroke="none"><path d="M0 1h6l2 1.500h14V19H0z" fill="#f0c04e" /><path d="M1 3.500h20V18H1z" fill="#ffe698" /><path d="M4.500 19v-8.500h13V19h-3.500v-3.500h-6V19z" fill="#35a7dd" /></Svg>
    </TaskItem>
    <TaskItem>
      <Svg w={22} h={22} stroke="none"><path d="M.8 10C1.500 4 6 .5 11.500 .5c6 0 9.500 4 9.500 9v3H7.500c.3 3 3 4.800 6.500 4.800 2.300 0 4.500-.7 6-1.600v4.500c-2 1.200-4.500 1.800-7 1.800-5.500 0-9.500-3-9.500-8 0-3.500 2-6 5-7.500-1 1-1.500 2.200-1.500 3.500h7.500c0-2.500-1.500-4-4.500-4C6 5.800 2.500 7.500.8 10z" fill="#0078d7" /></Svg>
    </TaskItem>
    <TaskItem>
      <Svg w={24} h={24} stroke="none"><path d="M8 7V4q4-4.500 8 0v3" fill="none" stroke="#fff" strokeWidth="1.300" /><path d="M.5 6h23l-.7 17.500H1.200z" fill="#fff" /><path d="M6.500 9.500h5v5h-5z" fill="#f25022" /><path d="M12.500 9.500h5v5h-5z" fill="#7fba00" /><path d="M6.500 15.500h5v5h-5z" fill="#00a4ef" /><path d="M12.500 15.500h5v5h-5z" fill="#ffb900" /></Svg>
    </TaskItem>
    <TaskItem $running>
      <Svg w={24} h={22} stroke="none"><path d="M7 0h15v13H7z" fill="#0f78d4" /><path d="M14.500 0H22v6.500h-7.500z" fill="#28a8ea" /><path d="M7 11l8.500 4L24 10v11H7z" fill="#50d9ff" opacity=".65" /><path d="M7 12l17 9.500H7z" fill="#1490df" /><path d="M0 5h12v12H0z" fill="#0a5fb5" /><circle cx="6" cy="11" r="3" fill="none" stroke="#fff" strokeWidth="1.900" /></Svg>
    </TaskItem>
    <TaskItem>
      <Svg w={22} h={22} stroke="none"><circle cx="11" cy="11" r="11" fill="#fcc934" /><path d="M1.500 5.500a11 11 0 0 1 19 0H11l-5 8z" fill="#e33b2e" /><path d="M1.500 5.500 6.500 13.500 11 16l0 6A11 11 0 0 1 1.500 5.500z" fill="#1e9e4a" /><circle cx="11" cy="11" r="5.200" fill="#fff" /><circle cx="11" cy="11" r="4" fill="#4285f4" /></Svg>
    </TaskItem>
    <TaskItem $running>
      <Svg w={22} h={22} stroke="none"><path d="M11 3h11v16H11z" fill="#fff" stroke="#1f7244" /><path d="M13 6h7M13 9h7M13 12h7M13 15h7" stroke="#1f7244" strokeWidth="1.500" /><path d="M0 2.500 13 0v22L0 19.500z" fill="#1f7244" /><text x="2.500" y="15.500" fontSize="12" fontWeight="700" fill="#fff" fontFamily="Open Sans">X</text></Svg>
    </TaskItem>
    <TaskItem $active><IE s={23} /></TaskItem>
    <TaskItem $running><Excel /></TaskItem>
    <TaskItem $running>
      <Svg w={23} h={23} stroke="none">
        <path d="M1 9c0-2 .5-4 1.500-5l1.500 2 3-3 .5 3.500 5 .5L14.500 0l3 3.500c3 2 5 5 5 9a11 11 0 0 1-22 .5C.4 11.500.6 10 1 9z" fill="#ff8a1c" />
        <path d="M14.500 0l3 3.500c3 2 5 5 5 9 0 3-1.500 6-4 8 .5-6-.5-11-5.500-14z" fill="#ffd83b" />
        <path d="M.5 12.500a11 11 0 0 0 18 8.500c-6 0-12-1-15-8z" fill="#ff3a5e" />
        <circle cx="11.500" cy="12" r="4.800" fill="#7d46e8" /><path d="M4 8.500c3-1 5 0 7 1.500l-3 2.500q1 2 4 1.500-4 3.500-7 0z" fill="#ff9a2e" />
      </Svg>
    </TaskItem>
    <Tray>
      <Svg w={13} h={8} stroke="#fff" strokeWidth="1.400"><path d="M.7 7l5.800-6 5.800 6" /></Svg>
      <Gap $w={9} />
      <Svg w={17} h={15} stroke="#fff"><path d="M5 2h11.400v8.500H6M11 10.500V13M7.500 13.500h7M.6 1.500h4.500v4H.600zM2.800 5.500V13H5" /></Svg>
      <Gap $w={9} />
      <Text $ls={-0.48}>ENG</Text>
      <Clock><Text $ls={-0.39}>10:54 AM</Text><Text $ls={-0.65}>19/04/2021</Text></Clock>
      <Svg w={17} h={17} stroke="#fff" strokeWidth="1.300"><path d="M.7 1h15.600v12H11l-2.500 2.700L6 13H.700z" /></Svg>
    </Tray>
  </Taskbar>
);

export default function App() {
  return (
    <Desktop>
      <Global />
      <TopStrip />
      <Upper>
        <OutlookWindow>
          <Title />
          <TabRow>
            <Tab $after={4}><Text $size={13} $ls={-0.39}>File</Text></Tab>
            <Tab $active><Text $size={13} $ls={0} $weight={600}>Home</Text></Tab>
            <Tab><Text $size={13} $ls={-0.13}>Send / Receive</Text></Tab>
            <Tab><Text $size={13} $ls={-0.23}>Folder</Text></Tab>
            <Tab><Text $size={13} $ls={-0.35}>View</Text></Tab>
            <Tab><Text $size={13} $ls={-0.28}>Help</Text></Tab>
          </TabRow>
          <RibbonBar />
          <AlertBar>
            <Svg w={22} h={22} stroke="#e87a10" strokeWidth="1.400"><path d="M11 1 21 21H1z" fill="#fcd691" /><path d="M11 8v7M11 17v2" stroke="#444" strokeWidth="1.800" /></Svg>
            <Gap $w={9} />
            <Text $ls={0.13}>ADD-IN ALERT</Text>
            <Gap $w={10} />
            <Text $ls={-0.29}>Outlook detected an issue with an add-in and disabled it.</Text>
            <DetailsButton><Text $ls={-0.29}>View More Details...</Text></DetailsButton>
            <Grow />
            <Cross s={9} c="#605e5c" />
            <Gap $w={11} />
          </AlertBar>
          <Main>
            <Navigation />
            <MailList>
              <MailItems>
                <MailItem>
                  <MailRow $h={15}>
                    <Text $ls={-0.59}>RE: REPAIR AUTHORITY- KCB 787F ACCIDENT ON 21st JAN 2021 LANDR...</Text>
                    <Gap $w={37} />
                    <Text $ls={-0.57}>Fri 16/04</Text>
                  </MailRow>
                  <MailRow $pl={48}>
                    <Text $size={11.5} $ls={-0.38} $color="#605e5c">ATTENTION: This email came from an external source. Do not</Text>
                  </MailRow>
                </MailItem>
                <NextMail>
                  <Text $size={15} $ls={-0.2}>Josphat Njoroge</Text>
                  <Svg w={9} h={17}><path d="M3 4.500v8q1.500 2 3 0V3.500Q6 .8 3.500.8T1 3.500V13q.5 3 3.500 3T8 13V4" /></Svg>
                </NextMail>
              </MailItems>
              <ScrollTrack><ScrollDown><Svg w={8} h={5} fill="#605e5c" stroke="none"><path d="M.5 .5h7L4 4.500z" /></Svg></ScrollDown></ScrollTrack>
            </MailList>
            <Reading>
              <Actions>
                <Action $w={82}><SmallReply /><Text $ls={-0.3}>Reply</Text></Action>
                <Action $w={99}><SmallReply all /><Text $ls={-0.2}>Reply All</Text></Action>
                <Action $w={95}><ArrowRight /><Text $ls={-0.5}>Forward</Text></Action>
                <MoreAction><Svg w={16} h={4} fill="#323130" stroke="none"><circle cx="2" cy="2" r="1.500" /><circle cx="8" cy="2" r="1.500" /><circle cx="14" cy="2" r="1.500" /></Svg></MoreAction>
              </Actions>
              <Stamp><Text $ls={-0.53} $color="#605e5c">Fri 16/04/2021 11:41</Text></Stamp>
              <MailLink>https://valuation.jubileeinsurance.com/login</MailLink>
            </Reading>
          </Main>
          <Status />
        </OutlookWindow>
        <EdgeStrip />
      </Upper>
      <WindowsTaskbar />
      <IEWindow />
      <SecurityNotice />
    </Desktop>
  );
}
